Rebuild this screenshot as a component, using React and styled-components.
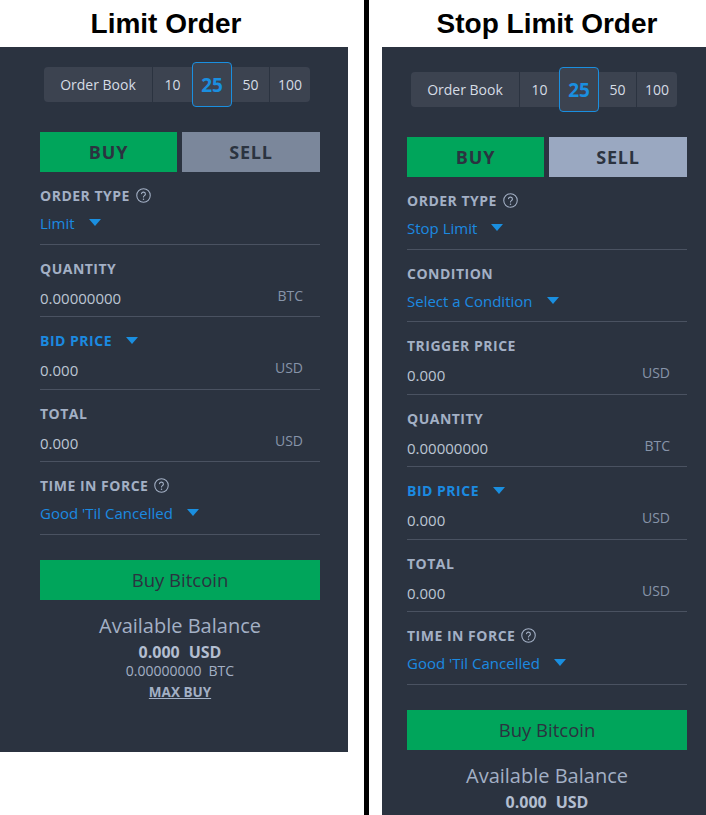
import React from "react";
import styled, { createGlobalStyle } from "styled-components";

const Global = createGlobalStyle`
  html, body { margin: 0; padding: 0; background: #fff; height: 815px; overflow: hidden; }
  #root { height: 815px; }
  * { box-sizing: border-box; }
`;

const Page = styled.div`
  display: flex;
  align-items: flex-start;
  width: 706px;
  height: 815px;
  overflow: hidden;
`;

const Column = styled.div`
  flex: 0 0 ${(p) => p.$w}px;
  display: flex;
  flex-direction: column;
`;

const Title = styled.h1`
  margin: 0;
  height: 47px;
  line-height: 47px;
  font-family: "Liberation Sans", Arial, sans-serif;
  font-weight: 700;
  font-size: 28px;
  color: #000;
  text-align: center;
  padding-right: ${(p) => p.$shift || 0}px;
`;

const Rule = styled.div`
  flex: 0 0 5px;
  align-self: stretch;
  background: #000;
  margin: 0 13px 0 16px;
`;

const Panel = styled.div`
  background: #2b3340;
  padding: ${(p) => p.$top}px ${(p) => p.$right}px 51px ${(p) => p.$left}px;
  font-family: "Open Sans", "Noto Sans", sans-serif;
`;

const Content = styled.div`
  width: 280px;
  display: flex;
  flex-direction: column;
`;

const Book = styled.div`
  display: flex;
  align-items: center;
  width: 266px;
  height: 35px;
  margin-left: 4px;
  background: #3c4350;
  border-radius: 4px;
`;

const Seg = styled.div`
  flex: 0 0 ${(p) => p.$w}px;
  height: 35px;
  display: flex;
  align-items: center;
  justify-content: center;
  font-size: 14px;
  color: #d6dce5;
  border-right: ${(p) => (p.$sep ? "1px solid #2b3340" : "none")};
`;

const ActiveSeg = styled(Seg)`
  height: 45px;
  border: 1px solid #1a8fe0;
  border-radius: 4px;
  background: #3c4350;
  color: #1a8fe0;
  font-weight: 700;
  font-size: 19px;
`;

const Sides = styled.div`
  display: grid;
  grid-template-columns: 137px 138px;
  gap: 5px;
  margin-top: 30px;
`;

const Side = styled.button`
  height: 40px;
  border: 0;
  border-radius: 0;
  padding: 0;
  background: ${(p) => p.$bg};
  color: #2b3340;
  font-family: "Open Sans", sans-serif;
  font-weight: 700;
  font-size: 18px;
  letter-spacing: 0.8px;
`;

const Section = styled.div`
  padding: 14px 0 ${(p) => (p.$select ? 10.5 : 8.5)}px;
  border-bottom: 1px solid #4a5261;
`;

const LabelRow = styled.div`
  display: flex;
  align-items: flex-start;
  height: 19px;
  line-height: 19px;
  font-weight: 700;
  font-size: 14px;
  letter-spacing: 0.5px;
  color: ${(p) => (p.$blue ? "#1b8ae0" : "#a3b0c5")};
`;

const ValueRow = styled.div`
  display: flex;
  align-items: flex-start;
  justify-content: ${(p) => (p.$select ? "flex-start" : "space-between")};
  height: 20px;
  margin-top: ${(p) => (p.$select ? 8 : 10)}px;
`;

const Value = styled.span`
  font-size: 15px;
  line-height: 20px;
  color: ${(p) => (p.$blue ? "#1b8ae0" : "#bcc5d3")};
`;

const Unit = styled.span`
  font-size: 14px;
  line-height: 15px;
  color: #8794a9;
  margin-right: 17px;
`;

const CaretSvg = styled.svg`
  flex: 0 0 12px;
  margin-left: 14px;
  margin-top: ${(p) => p.$top}px;
`;

const HelpSvg = styled.svg`
  flex: 0 0 15px;
  margin-left: 6px;
  margin-top: 2px;
`;

const BuyButton = styled.button`
  height: 40px;
  margin-top: 25px;
  border: 0;
  padding: 0;
  background: #00a55b;
  color: #2b3340;
  font-family: "Open Sans", sans-serif;
  font-size: 18.5px;
`;

const Balance = styled.div`
  display: flex;
  flex-direction: column;
  align-items: center;
  margin-top: 12px;
`;

const BalTitle = styled.div`
  font-size: 20px;
  line-height: 27px;
  color: #a3b0c5;
`;

const BalMain = styled.div`
  display: flex;
  gap: 9px;
  font-weight: 700;
  font-size: 16px;
  line-height: 20px;
  color: #b3bed0;
  margin-top: 3px;
`;

const BalSub = styled.div`
  display: flex;
  gap: 7px;
  font-size: 14px;
  line-height: 18px;
  color: #a3b0c5;
`;

const MaxBuy = styled.a`
  margin-top: 3px;
  font-weight: 700;
  font-size: 13.5px;
  line-height: 18px;
  color: #a3b0c5;
  text-decoration: underline;
`;

const Caret = ({ top }) => (
  <CaretSvg $top={top} width="12" height="7" viewBox="0 0 12 7">
    <polygon points="0,0 12,0 6,7" fill="#1a8fe0" />
  </CaretSvg>
);

const Help = () => (
  <HelpSvg width="15" height="15" viewBox="0 0 24 24" fill="none" stroke="#a3b0c5" strokeWidth="1.7" strokeLinecap="round" strokeLinejoin="round">
    <circle cx="12" cy="12" r="10.8" />
    <path d="M8.8 9a3.2 3.2 0 0 1 6.3 0.8c0 2.2-3.1 2.6-3.1 4.6" />
    <path d="M12 17.8h.01" strokeWidth="2.4" />
  </HelpSvg>
);

const Field = ({ f }) => {
  const select = f.kind === "select";
  return (
    <Section $select={select}>
      <LabelRow $blue={f.blueLabel}>
        {f.label}
        {f.help && <Help />}
        {f.blueLabel && <Caret top={5.5} />}
      </LabelRow>
      <ValueRow $select={select}>
        <Value $blue={select}>{f.value}</Value>
        {select ? <Caret top={6} /> : <Unit>{f.unit}</Unit>}
      </ValueRow>
    </Section>
  );
};

const limitFields = [
  { kind: "select", label: "ORDER TYPE", help: true, value: "Limit" },
  { kind: "input", label: "QUANTITY", value: "0.00000000", unit: "BTC" },
  { kind: "input", label: "BID PRICE", blueLabel: true, value: "0.000", unit: "USD" },
  { kind: "input", label: "TOTAL", value: "0.000", unit: "USD" },
  { kind: "select", label: "TIME IN FORCE", help: true, value: "Good 'Til Cancelled" },
];

const stopFields = [
  { kind: "select", label: "ORDER TYPE", help: true, value: "Stop Limit" },
  { kind: "select", label: "CONDITION", value: "Select a Condition" },
  { kind: "input", label: "TRIGGER PRICE", value: "0.000", unit: "USD" },
  { kind: "input", label: "QUANTITY", value: "0.00000000", unit: "BTC" },
  { kind: "input", label: "BID PRICE", blueLabel: true, value: "0.000", unit: "USD" },
  { kind: "input", label: "TOTAL", value: "0.000", unit: "USD" },
  { kind: "select", label: "TIME IN FORCE", help: true, value: "Good 'Til Cancelled" },
];

const OrderPanel = ({ fields, top, left, right, sellBg }) => (
  <Panel $top={top} $left={left} $right={right}>
    <Content>
      <Book>
        <Seg $w={109} $sep>Order Book</Seg>
        <Seg $w={39}>10</Seg>
        <ActiveSeg $w={40}>25</ActiveSeg>
        <Seg $w={38} $sep>50</Seg>
        <Seg $w={40}>100</Seg>
      </Book>
      <Sides>
        <Side $bg="#00a55b">BUY</Side>
        <Side $bg={sellBg}>SELL</Side>
      </Sides>
      {fields.map((f, i) => (
        <Field key={i} f={f} />
      ))}
      <BuyButton>Buy Bitcoin</BuyButton>
      <Balance>
        <BalTitle>Available Balance</BalTitle>
        <BalMain>
          <span>0.000</span>
          <span>USD</span>
        </BalMain>
        <BalSub>
          <span>0.00000000</span>
          <span>BTC</span>
        </BalSub>
        <MaxBuy>MAX BUY</MaxBuy>
      </Balance>
    </Content>
  </Panel>
);

export default function App() {
  return (
    <>
      <Global />
      <Page>
        <Column $w={348}>
          <Title $shift={16}>Limit Order</Title>
          <OrderPanel fields={limitFields} top={20} left={40} right={28} sellBg="#7b879b" />
        </Column>
        <Rule />
        <Column $w={330}>
          <Title>Stop Limit Order</Title>
          <OrderPanel fields={stopFields} top={25} left={25} right={25} sellBg="#9aa8c1" />
        </Column>
      </Page>
    </>
  );
}
